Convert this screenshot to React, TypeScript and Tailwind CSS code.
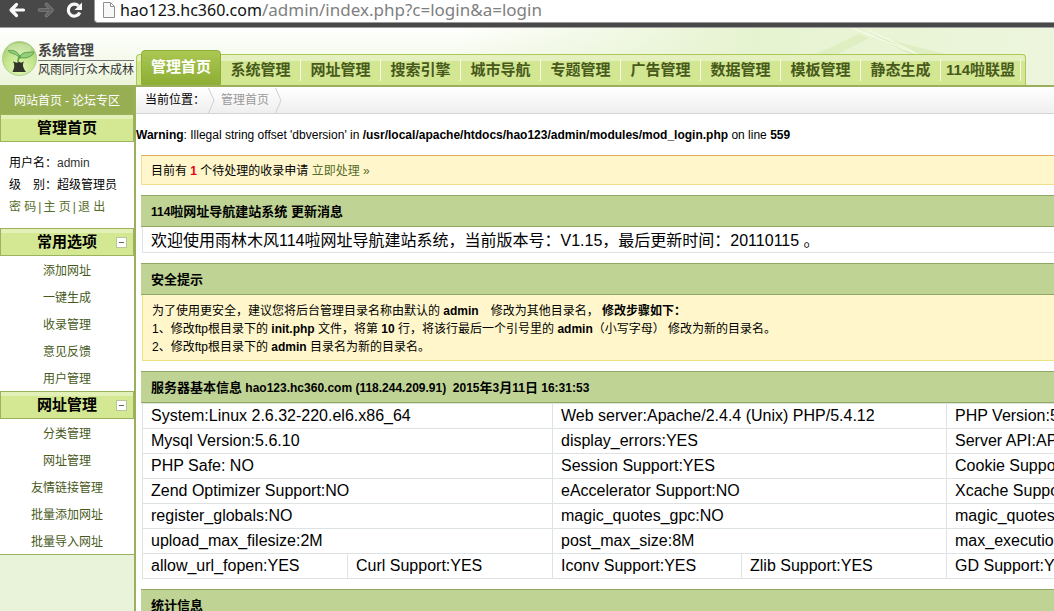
import React from "react";

const tabs = ["系统管理", "网址管理", "搜索引擎", "城市导航", "专题管理", "广告管理", "数据管理", "模板管理", "静态生成", "114啦联盟"];

const menus = [
  { title: "常用选项", items: ["添加网址", "一键生成", "收录管理", "意见反馈", "用户管理"] },
  { title: "网址管理", items: ["分类管理", "网址管理", "友情链接管理", "批量添加网址", "批量导入网址"] },
];

const serverRows = [
  ["System:Linux 2.6.32-220.el6.x86_64", "Web server:Apache/2.4.4 (Unix) PHP/5.4.12", "PHP Version:5.4.12"],
  ["Mysql Version:5.6.10", "display_errors:YES", "Server API:APACHE"],
  ["PHP Safe: NO", "Session Support:YES", "Cookie Support:YES"],
  ["Zend Optimizer Support:NO", "eAccelerator Support:NO", "Xcache Support:NO"],
  ["register_globals:NO", "magic_quotes_gpc:NO", "magic_quotes_runtime:NO"],
  ["upload_max_filesize:2M", "post_max_size:8M", "max_execution_time:30"],
];

const lastRow = ["allow_url_fopen:YES", "Curl Support:YES", "Iconv Support:YES", "Zlib Support:YES", "GD Support:YES"];

function BrowserBar() {
  return (
    <div className="flex h-7 shrink-0 overflow-hidden border-b border-[#a0a0a0] bg-[#484848]">
      <div className="flex h-5 w-[94px] shrink-0 items-center gap-2 pl-2">
        <button type="button" aria-label="Back">
          <svg width="20" height="20" viewBox="0 0 20 20" fill="none" stroke="#fafafa" strokeWidth="3.2" strokeLinecap="round" strokeLinejoin="round">
            <path d="M15.500 10H4M8.500 4.500L3 10l5.500 5.500" />
          </svg>
        </button>
        <button type="button" aria-label="Forward">
          <svg width="20" height="20" viewBox="0 0 20 20" fill="none" strokeLinecap="round" strokeLinejoin="round">
            <path d="M3.500 10H15M10.500 4.500L16 10l-5.500 5.500" stroke="#808080" strokeWidth="3.600" />
            <path d="M3.500 10H15M10.500 4.500L16 10l-5.500 5.500" stroke="#626262" strokeWidth="1.800" />
          </svg>
        </button>
        <button type="button" aria-label="Reload">
          <svg width="20" height="20" viewBox="0 0 20 20">
            <path d="M14.500 5.800A6 6 0 1 0 15.800 12.500" fill="none" stroke="#fafafa" strokeWidth="3.200" />
            <path d="M18 2.500v7.500H10.500z" fill="#fafafa" />
          </svg>
        </button>
      </div>
      <div className="flex h-[23px] min-w-0 flex-1 items-start rounded-bl border-b border-l border-[#999] bg-white pl-2">
        <svg className="mt-0.5 shrink-0" width="12" height="16" viewBox="0 0 12 16" fill="#f7f7f7" stroke="#909090">
          <path d="M.5.5h7l4 4v11H.5zM7.500.5v4h4" />
        </svg>
        <div className="ml-[5px] whitespace-nowrap font-['Noto_Sans',sans-serif] text-[16px] leading-5 text-[#111]">
          hao123.hc360.com<span className="text-[17px] text-[#808080]">/admin/index.php?c=login&amp;a=login</span>
        </div>
      </div>
    </div>
  );
}

function Logo() {
  return (
    <div className="flex h-[57px] w-[136px] shrink-0 items-start pl-0.5 pt-3">
      <svg className="shrink-0" width="36" height="37" viewBox="0 0 36 37">
        <defs>
          <radialGradient id="ball" cx="50%" cy="80%" r="75%">
            <stop offset="0" stopColor="#e2f7b4" />
            <stop offset=".6" stopColor="#c3e58c" />
            <stop offset="1" stopColor="#a3cc6c" />
          </radialGradient>
        </defs>
        <circle cx="17.500" cy="18.500" r="17" fill="url(#ball)" stroke="#b4cf92" />
        <ellipse cx="17.500" cy="9" rx="12" ry="6" fill="#fff" opacity=".3" />
        <path d="M11 21.500l4 1.200 2-1 2 1 3-1.200c-2 3-1 6 2 10.500H10.500c2-4 2.500-7.500.5-10.500z" fill="#31352c" />
        <path d="M16 22c0-3 .5-5 2.500-7" fill="none" stroke="#5e9a4a" strokeWidth="1.500" />
        <path d="M18 18.500C14 12.500 10 15 6 10.500c4-.5 11 0 12 8z" fill="#93cf78" stroke="#559c4c" strokeWidth=".9" />
        <path d="M18 17.500c1-6 7-5 14-5.500-2 5-8 7-14 5.500z" fill="#93cf78" stroke="#559c4c" strokeWidth=".9" />
      </svg>
      <div className="whitespace-nowrap">
        <div className="border-b border-[#777] pt-px text-[14px] font-bold leading-[19px] text-[#444]">系统管理</div>
        <div className="text-[12px] leading-[18px] text-[#333]">风雨同行众木成林</div>
      </div>
    </div>
  );
}

function Header() {
  return (
    <header className="relative flex h-[59px] shrink-0 items-start overflow-hidden border-b-2 border-[#9caf5c] bg-linear-to-b from-white to-[#ecf5db]">
      <svg className="absolute inset-y-0 right-0 h-full w-[600px]" viewBox="0 0 600 57" preserveAspectRatio="none" aria-hidden="true">
        <defs>
          <linearGradient id="haze" x1="0" x2="1">
            <stop offset="0" stopColor="#e6f3d0" stopOpacity="0" />
            <stop offset=".5" stopColor="#e6f3d0" />
            <stop offset="1" stopColor="#edf6dd" />
          </linearGradient>
        </defs>
        <path d="M0 0h600v57H0z" fill="url(#haze)" />
        <path d="M360 27L405 6l10 4-32 17zM420 8l75 19h-38z" fill="#dcedba" opacity=".7" />
        <path d="M398 0l68 27M415 2l45 22" fill="none" stroke="#f8fdec" />
      </svg>
      <div className="relative flex w-full">
        <Logo />
        <nav className="flex h-[57px] items-end">
          <div className="flex h-[31px] items-end rounded-t border border-b-0 border-[#abc858] bg-linear-to-b from-[#e4f0bd] from-20% to-[#d3e692] to-20% px-1">
            <a href="#home" className="flex h-[35px] w-20 shrink-0 items-center justify-center rounded-t-sm border border-[#8eae38] bg-linear-to-b from-[#abc852] to-[#8eae35] text-[15px] font-bold text-white">
              管理首页
            </a>
            {tabs.map((t) => (
              <a
                key={t}
                href="#tab"
                className="my-1 flex h-[22px] w-20 shrink-0 items-center justify-center whitespace-nowrap border-r border-[#f7fbe6] text-[15px] font-bold text-[#475a1b]"
              >
                {t}
              </a>
            ))}
          </div>
        </nav>
      </div>
    </header>
  );
}

function MenuTitle({ title, toggle }: { title: string; toggle?: boolean }) {
  return (
    <h2 className="relative flex h-7 items-center justify-center border border-[#9bb35c] bg-linear-to-b from-[#e3f1b8] from-15% to-[#d4e793] to-15% pt-px text-[15px] font-bold text-black">
      {title}
      {toggle && (
        <button type="button" aria-label="收起" className="absolute right-1.5 top-2 flex size-[11px] items-center justify-center border border-[#b9c79a] bg-white">
          <span className="h-px w-[5px] bg-[#666]" />
        </button>
      )}
    </h2>
  );
}

function Sidebar() {
  return (
    <aside className="w-[136px] shrink-0 border-r-2 border-[#9caf5c] bg-[#e9f3d9]">
      <div className="flex h-[27px] items-center justify-center gap-[3px] bg-[#98ae53] text-[12px] text-white">
        <a href="#site">网站首页</a>-<a href="#bbs">论坛专区</a>
      </div>
      <MenuTitle title="管理首页" />
      <div className="h-[86px] bg-white pl-[9px] pt-2.5 text-[12px] leading-[22px] text-black">
        <div>用户名：<span className="text-[#333]">admin</span></div>
        <div>级　别：超级管理员</div>
        <div className="flex gap-0.5 text-[#566c2b]">
          <a href="#password">密 码</a>|<a href="#main">主 页</a>|<a href="#logout">退 出</a>
        </div>
      </div>
      {menus.map((m) => (
        <div key={m.title}>
          <MenuTitle title={m.title} toggle />
          <ul className="h-[135px] bg-white pt-0.5 text-center text-[12px] leading-[27px] text-[#475a1b]">
            {m.items.map((i) => (
              <li key={i}><a href="#item">{i}</a></li>
            ))}
          </ul>
        </div>
      ))}
      <div className="border-t border-[#9bb35c]" />
    </aside>
  );
}

function SectionTitle({ children }: { children: React.ReactNode }) {
  return (
    <h3 className="h-8 whitespace-pre border-y border-[#8ea765] bg-[#bfd394] pl-2.5 text-[13px] font-bold leading-[31px] text-black">
      {children}
    </h3>
  );
}

function Chevron() {
  return (
    <svg width="7" height="25" viewBox="0 0 7 25" fill="none" stroke="#cfcfcf">
      <path d="M.5 0l5.500 12.500L.5 25" />
    </svg>
  );
}

function Main() {
  const cell = "h-[25px] border border-[#dde3e3] p-0 pl-2 text-left";
  return (
    <main className="min-w-0 flex-1 overflow-hidden bg-white text-[12px] text-black">
      <div className="flex h-[27px] items-center border-b border-[#d4d4d4] bg-linear-to-b from-white to-[#efefef] pl-[9px]">
        <span className="w-[63px]">当前位置：</span>
        <Chevron />
        <span className="px-1.5 text-[#999]">管理首页</span>
        <Chevron />
      </div>
      <p className="h-[41px] whitespace-nowrap pt-3 leading-[18px]">
        <b>Warning</b>: Illegal string offset 'dbversion' in <b>/usr/local/apache/htdocs/hao123/admin/modules/mod_login.php</b> on line <b>559</b>
      </p>
      <div className="flex flex-col gap-2.5 pl-[5px]">
        <p className="h-[30px] whitespace-nowrap border border-r-0 border-[#f2df8b] border-t-[#e0ad58] bg-[#fff7cb] pl-[9px] leading-[30px]">
          目前有 <b className="text-[#e60012]">1</b> 个待处理的收录申请 <a href="#review" className="text-[#566c2b]">立即处理 »</a>
        </p>
        <section>
          <SectionTitle><span className="text-[12px]">114</span>啦网址导航建站系统 更新消息</SectionTitle>
          <p className="ml-px h-[26px] whitespace-nowrap border-b border-l border-[#dde3e3] pl-2 text-[16px] leading-[27px]">
            欢迎使用雨林木风114啦网址导航建站系统，当前版本号：V1.15，最后更新时间：20110115 。
          </p>
        </section>
        <section>
          <SectionTitle>安全提示</SectionTitle>
          <div className="ml-px h-[66px] whitespace-nowrap border-b border-l border-[#eee27c] bg-[#fff7cb] pl-[9px] pt-[7px] leading-[18px]">
            <p>为了使用更安全，建议您将后台管理目录名称由默认的 <b>admin</b>　修改为其他目录名，<b> 修改步骤如下：</b></p>
            <p>1、修改ftp根目录下的 <b>init.php</b> 文件，将第 <b>10</b> 行，将该行最后一个引号里的 <b>admin</b>（小写字母） 修改为新的目录名。</p>
            <p>2、修改ftp根目录下的 <b>admin</b> 目录名为新的目录名。</p>
          </div>
        </section>
        <section>
          <SectionTitle>
            服务器基本信息<span className="text-[12px]">{" hao123.hc360.com (118.244.209.91)  2015"}</span>年<span className="text-[12px]">3</span>月<span className="text-[12px]">11</span>日<span className="text-[12px]"> 16:31:53</span>
          </SectionTitle>
          <table className="ml-px w-[1204px] table-fixed border-collapse whitespace-nowrap text-[16px] leading-6">
            <colgroup>
              <col className="w-[205px]" />
              <col className="w-[205px]" />
              <col className="w-[189px]" />
              <col className="w-[205px]" />
              <col />
            </colgroup>
            <tbody>
              {serverRows.map((r) => (
                <tr key={r[0]}>
                  <td colSpan={2} className={cell}>{r[0]}</td>
                  <td colSpan={2} className={cell}>{r[1]}</td>
                  <td className={cell}>{r[2]}</td>
                </tr>
              ))}
              <tr>
                {lastRow.map((c) => (
                  <td key={c} className={cell}>{c}</td>
                ))}
              </tr>
            </tbody>
          </table>
        </section>
        <SectionTitle>统计信息</SectionTitle>
      </div>
    </main>
  );
}

export default function App() {
  return (
    <div className="flex h-screen flex-col overflow-hidden font-['Liberation_Sans','Noto_Sans_CJK_SC',sans-serif]">
      <BrowserBar />
      <Header />
      <div className="flex min-h-0 flex-1">
        <Sidebar />
        <Main />
      </div>
    </div>
  );
}
